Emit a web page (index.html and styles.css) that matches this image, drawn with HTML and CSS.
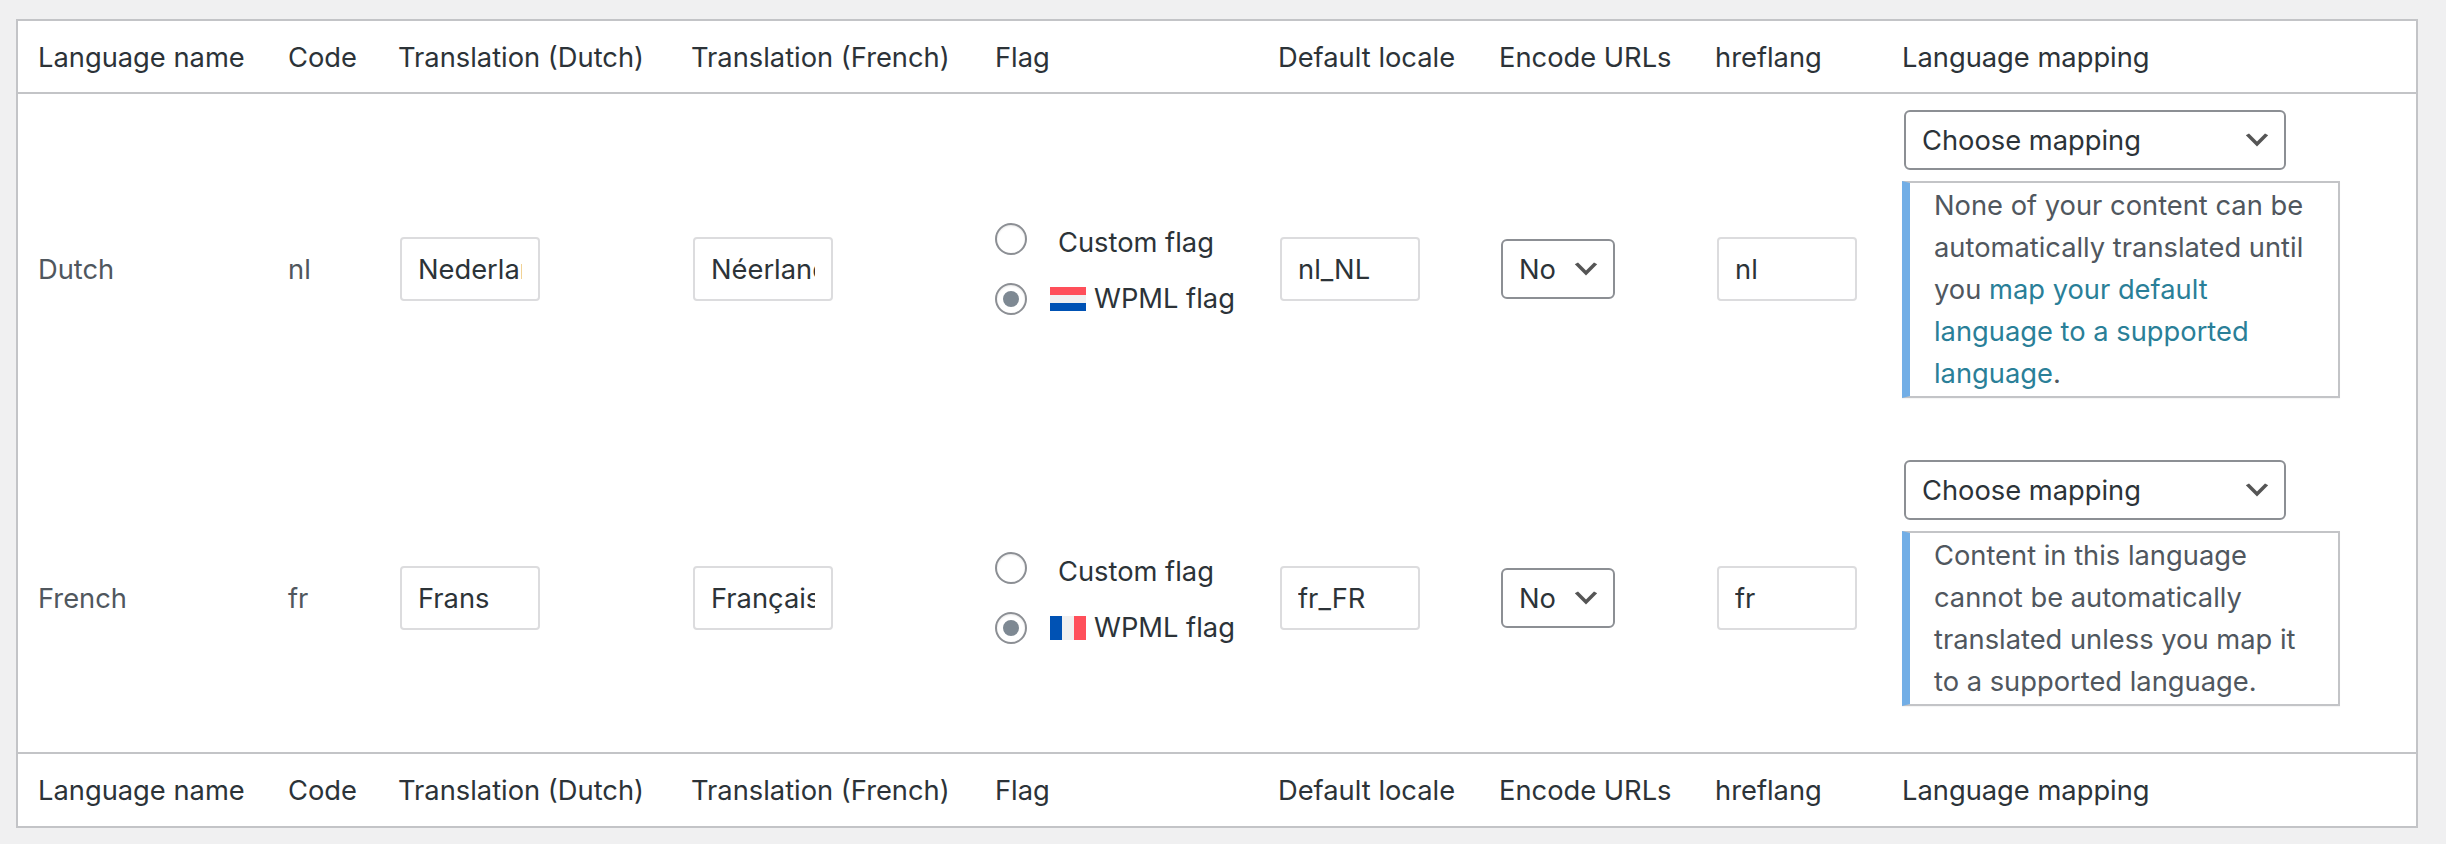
FILE: index.html
```html
<!DOCTYPE html>
<html lang="en">
<head>
<meta charset="utf-8">
<title>Language settings</title>
<link rel="stylesheet" href="styles.css">
</head>
<body>
<table class="langs">
  <colgroup>
    <col class="c-name"><col class="c-code"><col class="c-tr1"><col class="c-tr2"><col class="c-flag"><col class="c-locale"><col class="c-enc"><col class="c-href"><col class="c-map">
  </colgroup>
  <thead>
    <tr>
      <th>Language name</th><th>Code</th><th>Translation (Dutch)</th><th>Translation (French)</th><th>Flag</th><th>Default locale</th><th>Encode URLs</th><th>hreflang</th><th>Language mapping</th>
    </tr>
  </thead>
  <tbody>
    <tr>
      <td class="plain">Dutch</td>
      <td class="plain">nl</td>
      <td><input class="text" type="text" value="Nederlands"></td>
      <td><input class="text" type="text" value="Néerlandais"></td>
      <td>
        <div class="flagopts">
          <label class="flagopt"><input class="radio" type="radio" name="f1"><span class="custom">Custom flag</span></label>
          <label class="flagopt"><input class="radio" type="radio" name="f1" checked>
            <svg class="flag" viewBox="0 0 3 3" preserveAspectRatio="none"><rect width="3" height="1" fill="#ff4f5a"/><rect y="1" width="3" height="1" fill="#f0f0f0"/><rect y="2" width="3" height="1" fill="#0052b4"/></svg>
            <span>WPML flag</span></label>
        </div>
      </td>
      <td><input class="text" type="text" value="nl_NL"></td>
      <td><select class="sel sel-no"><option>No</option></select></td>
      <td><input class="text" type="text" value="nl"></td>
      <td class="mapcell">
        <select class="sel sel-map"><option>Choose mapping</option></select>
        <div class="notice">None of your content can be automatically translated until you <a href="#">map your default language to a supported language</a>.</div>
      </td>
    </tr>
    <tr>
      <td class="plain">French</td>
      <td class="plain">fr</td>
      <td><input class="text" type="text" value="Frans"></td>
      <td><input class="text" type="text" value="Français"></td>
      <td>
        <div class="flagopts">
          <label class="flagopt"><input class="radio" type="radio" name="f2"><span class="custom">Custom flag</span></label>
          <label class="flagopt"><input class="radio" type="radio" name="f2" checked>
            <svg class="flag" viewBox="0 0 3 3" preserveAspectRatio="none"><rect width="1" height="3" fill="#0052b4"/><rect x="1" width="1" height="3" fill="#f0f0f0"/><rect x="2" width="1" height="3" fill="#ff4f5a"/></svg>
            <span>WPML flag</span></label>
        </div>
      </td>
      <td><input class="text" type="text" value="fr_FR"></td>
      <td><select class="sel sel-no"><option>No</option></select></td>
      <td><input class="text" type="text" value="fr"></td>
      <td class="mapcell">
        <select class="sel sel-map"><option>Choose mapping</option></select>
        <div class="notice">Content in this language cannot be automatically translated unless you map it to a supported language.</div>
      </td>
    </tr>
  </tbody>
  <tfoot>
    <tr>
      <th>Language name</th><th>Code</th><th>Translation (Dutch)</th><th>Translation (French)</th><th>Flag</th><th>Default locale</th><th>Encode URLs</th><th>hreflang</th><th>Language mapping</th>
    </tr>
  </tfoot>
</table>
</body>
</html>
```
FILE: styles.css
```css
* { box-sizing: border-box; }
html, body { height: 100%; }
body {
  margin: 0;
  padding: 19px 28px 0 16px;
  background: #f0f0f1;
  font-family: Inter, "Liberation Sans", sans-serif;
  font-size: 27.3px;
  line-height: 42px;
  color: #50575e;
  overflow: hidden;
}
.langs {
  width: 2402px;
  table-layout: fixed;
  border-collapse: separate;
  border-spacing: 0;
  background: #fff;
  border: 2px solid #c3c4c7;
}
.c-name { width: 250px; }
.c-code { width: 110px; }
.c-tr1 { width: 293px; }
.c-tr2 { width: 304px; }
.c-flag { width: 283px; }
.c-locale { width: 221px; }
.c-enc { width: 216px; }
.c-href { width: 187px; }
.c-map { width: 534px; }
th {
  padding: 2px 0 0 20px;
  text-align: left;
  font-weight: 400;
  color: #2c3338;
  white-space: nowrap;
}
thead th { border-bottom: 2px solid #c3c4c7; height: 73px; }
tfoot th { border-top: 2px solid #c3c4c7; height: 74px; }
td {
  padding: 0 0 0 20px;
  vertical-align: middle;
}
td.plain { padding-top: 2px; }
.text {
  display: block;
  width: 140px;
  height: 64px;
  margin: 0 2px;
  padding: 0 16px;
  border: 2px solid #dcdcde;
  border-radius: 4px;
  background: #fff;
  color: #2c3338;
  font: inherit;
  outline: 0;
}
.sel {
  display: block;
  height: 60px;
  margin: 0 2px;
  padding: 2px 48px 0 16px;
  border: 2px solid #8c8f94;
  border-radius: 6px;
  color: #2c3338;
  font: inherit;
  appearance: none;
  -webkit-appearance: none;
  background: #fff url("data:image/svg+xml,%3Csvg xmlns='http://www.w3.org/2000/svg' viewBox='0 0 20 20'%3E%3Cpath d='M5 6l5 5 5-5 2 1-7 7-7-7 2-1z' fill='%23555'/%3E%3C/svg%3E") no-repeat right 11px top 50% / 32px 32px;
}
.sel-no { width: 114px; }
.sel-map { width: 382px; }
.mapcell { padding-top: 16px; padding-bottom: 16px; }
.notice {
  width: 438px;
  margin: 11px 0 30px;
  padding: 2px 16px 1px 24px;
  border: 2px solid #c3c4c7;
  border-left: 8px solid #72aee6;
  box-shadow: 0 1px 1px rgba(0, 0, 0, 0.04);
  color: #50575e;
}
.notice a { color: #2a7f98; text-decoration: none; }
.flagopts { display: flex; flex-direction: column; gap: 28px; }
.flagopt { display: flex; align-items: center; height: 32px; color: #2c3338; white-space: nowrap; }
.radio {
  appearance: none;
  -webkit-appearance: none;
  flex: none;
  width: 32px;
  height: 32px;
  margin: 0;
  border: 2px solid #8c8f94;
  border-radius: 50%;
  background: #fff;
  box-shadow: inset 0 1px 2px rgba(0, 0, 0, 0.1);
  display: grid;
  place-content: center;
}
.radio:checked::before {
  content: "";
  width: 16px;
  height: 16px;
  border-radius: 50%;
  background: #7e8993;
}
.custom { margin-left: 31px; padding-top: 8px; }
.flag { flex: none; width: 36px; height: 24px; margin-left: 23px; margin-right: 8px; }
```
